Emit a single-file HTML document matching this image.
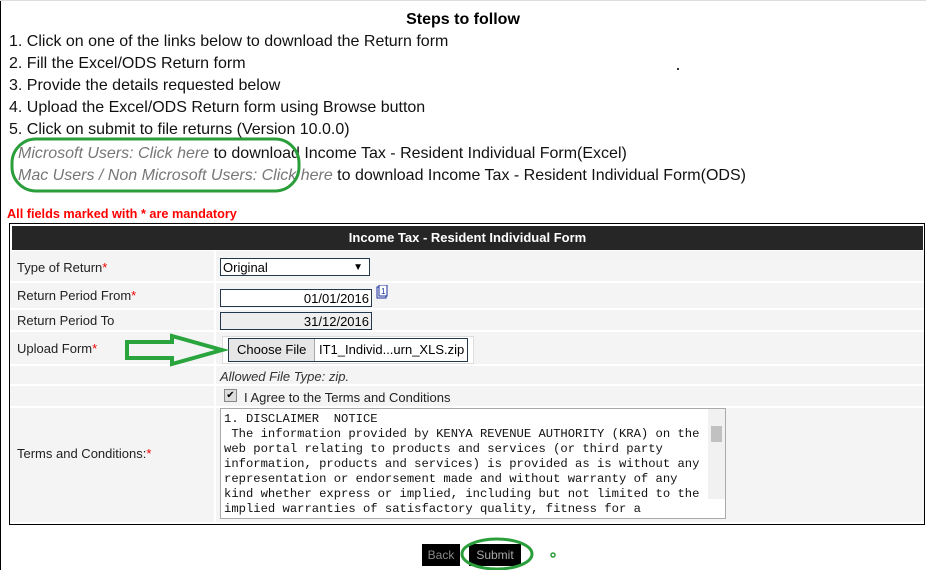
<!DOCTYPE html>
<html><head><style>
body{margin:0;width:926px;height:570px;background:#fff;font-family:"Liberation Sans",Arial,sans-serif;position:relative;overflow:hidden}
.a{position:absolute;white-space:nowrap}
.l{font-size:16px;color:#111;left:9px}
.g{color:#777;font-style:italic}
.lab{font-size:13px;color:#222;left:17px}
.r{color:#e00}
.row{position:absolute;left:10px;width:914px;background:#f4f4f4;border-bottom:2px solid #fff}
.vc{position:absolute;left:214px;width:2px;background:#fff;top:250px;height:272px}
.inp{position:absolute;border:1px solid #23384f;height:18px;font-size:13px;text-align:right;box-sizing:border-box;padding:1px 2px;line-height:15px}
</style></head><body>
<div class="a" style="left:0;top:0;width:1px;height:570px;background:#000"></div>
<div class="a" style="left:0;top:0;width:926px;height:1px;background:#ddd"></div>
<div class="a" style="left:0;top:11px;width:926px;text-align:center;font-weight:bold;font-size:16px">Steps to follow</div>
<div class="a l" style="top:33px">1. Click on one of the links below to download the Return form</div>
<div class="a l" style="top:55px">2. Fill the Excel/ODS Return form</div>
<div class="a l" style="top:77px">3. Provide the details requested below</div>
<div class="a l" style="top:99px">4. Upload the Excel/ODS Return form using Browse button</div>
<div class="a l" style="top:121px">5. Click on submit to file returns (Version 10.0.0)</div>
<div class="a l" style="top:145px;left:18px"><span class="g">Microsoft Users: Click here</span> to download Income Tax - Resident Individual Form(Excel)</div>
<div class="a l" style="top:167px;left:18px"><span class="g">Mac Users / Non Microsoft Users: Click here</span> to download Income Tax - Resident Individual Form(ODS)</div>
<div class="a" style="left:677px;top:68px;width:2px;height:2px;background:#333"></div>
<div class="a" style="left:7px;top:207px;color:#f00;font-weight:bold;font-size:12.7px">All fields marked with * are mandatory</div>
<div class="a" style="left:9px;top:223px;width:914px;height:300px;border:1px solid #000;background:#fff"></div>
<div class="a" style="left:12px;top:226px;width:911px;height:24px;background:#262626;color:#fff;font-weight:bold;font-size:13px;text-align:center;line-height:24px">Income Tax - Resident Individual Form</div>
<div class="row" style="top:251px;height:30px"></div>
<div class="row" style="top:283px;height:25px"></div>
<div class="row" style="top:310px;height:20px"></div>
<div class="row" style="top:332px;height:32px"></div>
<div class="row" style="top:366px;height:18px"></div>
<div class="row" style="top:386px;height:20px"></div>
<div class="row" style="top:408px;height:114px"></div>
<div class="vc"></div>
<div class="a lab" style="top:260px">Type of Return<span class="r">*</span></div>
<div class="a lab" style="top:288px">Return Period From<span class="r">*</span></div>
<div class="a lab" style="top:313px">Return Period To</div>
<div class="a lab" style="top:341px">Upload Form<span class="r">*</span></div>
<div class="a lab" style="top:446px">Terms and Conditions:<span class="r">*</span></div>
<div class="inp" style="left:220px;top:258px;width:150px;text-align:left;background:#fff">Original<span style="position:absolute;right:6px;font-size:10px">▼</span></div>
<div class="inp" style="left:220px;top:289px;width:152px;background:#fff">01/01/2016</div>
<svg class="a" style="left:376px;top:285px" width="12" height="14"><rect x="1" y="2" width="9" height="11" fill="none" stroke="#1a2fa0"/><rect x="3" y="0" width="8" height="11" fill="#fff" stroke="#1a2fa0"/><text x="5" y="9" font-size="8" fill="#1a2fa0" font-family="Liberation Sans">1</text></svg>
<div class="inp" style="left:220px;top:312px;width:152px;background:#eee">31/12/2016</div>
<div class="a" style="left:222px;top:336px;width:250px;height:26px;background:#fff;border:1px solid #ddd"></div>
<div class="a" style="left:228px;top:338px;width:238px;height:22px;border:1px solid #23384f;background:#fff;font-size:13px;line-height:22px"><span style="display:inline-block;background:#e6e6e6;border-right:1px solid #aaa;padding:0 8px;height:22px">Choose File</span> IT1_Individ...urn_XLS.zip</div>
<div class="a" style="left:220px;top:369px;font-size:13px;font-style:italic;color:#333">Allowed File Type: zip.</div>
<div class="a" style="left:224px;top:389px;width:11px;height:11px;border:1px solid #888;background:#ddd;font-size:10px;line-height:11px;text-align:center">✔</div>
<div class="a" style="left:244px;top:390px;font-size:13px;color:#222">I Agree to the Terms and Conditions</div>
<div class="a" style="left:220px;top:408px;width:506px;height:111px;border:1px solid #aaa;background:#fff;overflow:hidden;font-family:'Liberation Mono',monospace;font-size:12.2px;line-height:15px;padding:3px 0 0 3px;box-sizing:border-box;white-space:pre;color:#111">1. DISCLAIMER  NOTICE
 The information provided by KENYA REVENUE AUTHORITY (KRA) on the
web portal relating to products and services (or third party
information, products and services) is provided as is without any
representation or endorsement made and without warranty of any
kind whether express or implied, including but not limited to the
implied warranties of satisfactory quality, fitness for a</div>
<div class="a" style="left:708px;top:409px;width:17px;height:90px;background:#f1f1f1"></div>
<div class="a" style="left:711px;top:426px;width:11px;height:16px;background:#c1c1c1"></div>
<div class="a" style="left:422px;top:544px;width:38px;height:22px;background:#000;color:#888;font-size:12px;line-height:22px;text-align:center">Back</div>
<div class="a" style="left:469px;top:544px;width:52px;height:22px;background:#000;color:#aaa;font-size:12px;line-height:22px;text-align:center">Submit</div>
<svg class="a" style="left:0;top:0" width="926" height="570">
<rect x="12" y="139" width="287" height="52" rx="24" ry="24" fill="none" stroke="#2a9e3a" stroke-width="3"/>
<polygon points="127,342 172,342 172,336 222,350 172,364 172,358 127,358" fill="none" stroke="#2aa53e" stroke-width="4"/>
<ellipse cx="497" cy="554" rx="35" ry="15" fill="none" stroke="#2a9e3a" stroke-width="3"/>
<circle cx="553" cy="555" r="2" fill="none" stroke="#2a9e3a" stroke-width="1.5"/>
</svg>
</body></html>
